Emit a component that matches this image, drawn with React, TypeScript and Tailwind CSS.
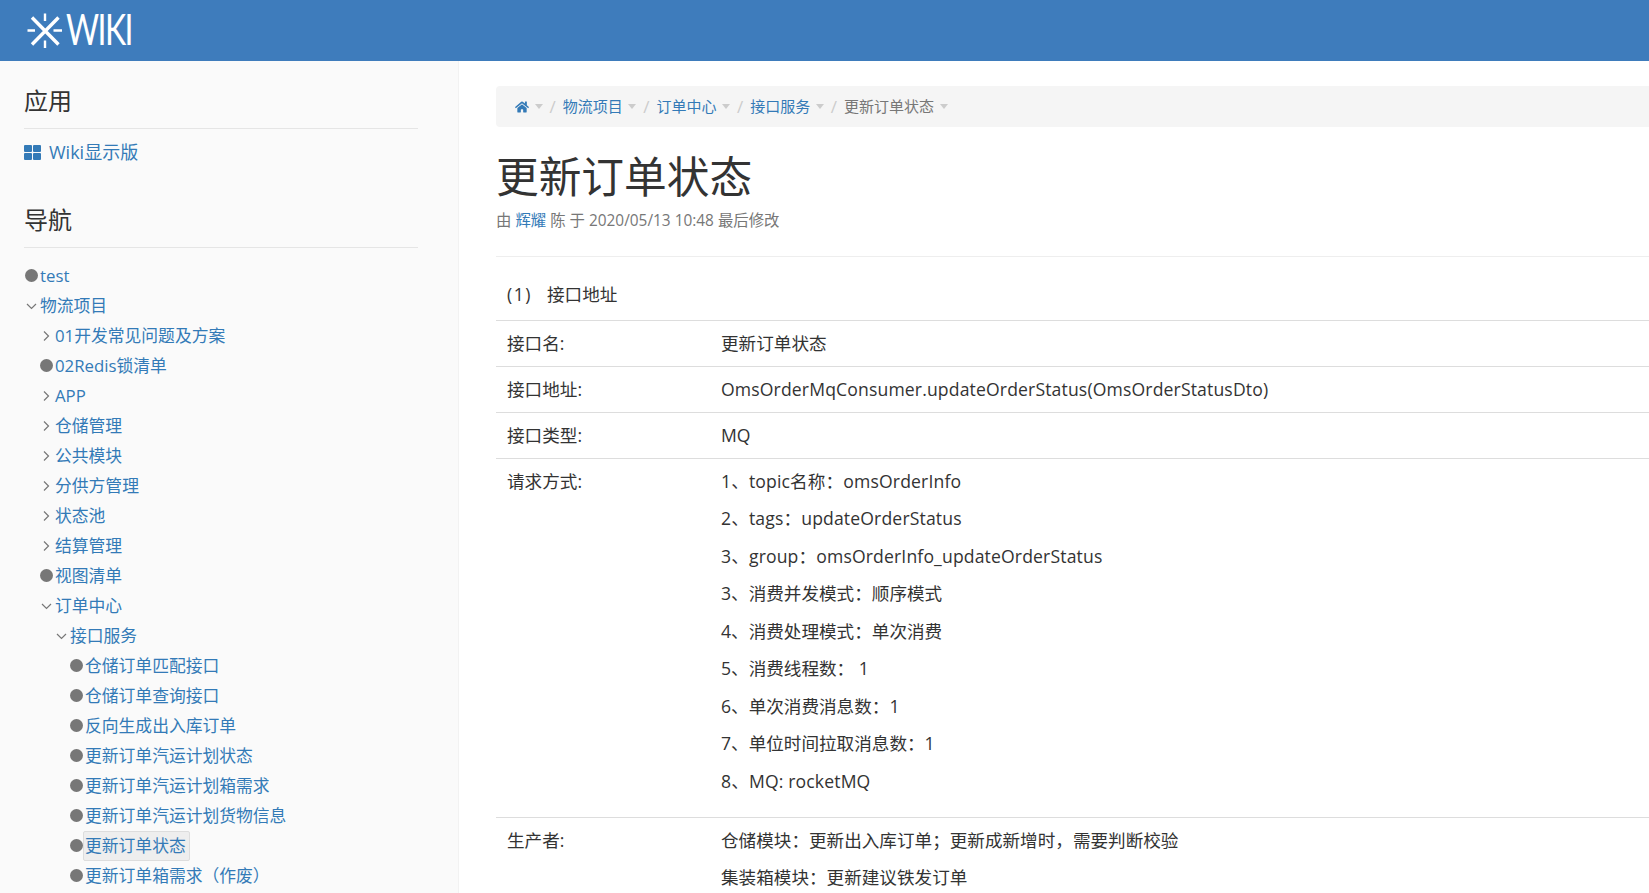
import React from "react";
import { FaHome } from "react-icons/fa";

type Node = { label: string; level: number; kind: "leaf" | "open" | "closed"; active?: boolean };

const tree: Node[] = [
  { label: "test", level: 0, kind: "leaf" },
  { label: "物流项目", level: 0, kind: "open" },
  { label: "01开发常见问题及方案", level: 1, kind: "closed" },
  { label: "02Redis锁清单", level: 1, kind: "leaf" },
  { label: "APP", level: 1, kind: "closed" },
  { label: "仓储管理", level: 1, kind: "closed" },
  { label: "公共模块", level: 1, kind: "closed" },
  { label: "分供方管理", level: 1, kind: "closed" },
  { label: "状态池", level: 1, kind: "closed" },
  { label: "结算管理", level: 1, kind: "closed" },
  { label: "视图清单", level: 1, kind: "leaf" },
  { label: "订单中心", level: 1, kind: "open" },
  { label: "接口服务", level: 2, kind: "open" },
  { label: "仓储订单匹配接口", level: 3, kind: "leaf" },
  { label: "仓储订单查询接口", level: 3, kind: "leaf" },
  { label: "反向生成出入库订单", level: 3, kind: "leaf" },
  { label: "更新订单汽运计划状态", level: 3, kind: "leaf" },
  { label: "更新订单汽运计划箱需求", level: 3, kind: "leaf" },
  { label: "更新订单汽运计划货物信息", level: 3, kind: "leaf" },
  { label: "更新订单状态", level: 3, kind: "leaf", active: true },
  { label: "更新订单箱需求（作废）", level: 3, kind: "leaf" },
];

const indent = ["pl-[24px]", "pl-[39px]", "pl-[54px]", "pl-[69px]"];

function Logo() {
  return (
    <div className="flex items-center">
      <svg width="36" height="36" viewBox="0 0 36 36" className="shrink-0">
        <g stroke="#fff" fill="none">
          <path d="M5 31.5 L31.5 4.5 M5 4.5 L31.5 31.5" strokeWidth="3.4" />
          <path d="M18 0.5 V8 M18 27.5 V35 M0.5 17.5 H8 M26.5 17.5 H35" strokeWidth="2.4" />
        </g>
      </svg>
      <span className="mb-[3px] ml-[3px] origin-left scale-x-[0.76] font-['Lato',sans-serif] text-[42px] font-normal leading-[44px] tracking-[-2px] text-white">WIKI</span>
    </div>
  );
}

function TreeRow({ node }: { node: Node }) {
  return (
    <div className={`flex h-[30px] items-center ${indent[node.level]}`}>
      <span className="flex w-[16px] shrink-0 justify-start">
        {node.kind === "leaf" && <span className="mb-[2px] ml-[1px] h-[13px] w-[13px] rounded-full bg-[#777]" />}
        {node.kind === "open" && (
          <svg width="14" height="14" viewBox="0 0 14 14" className="mb-[1px]" fill="none" stroke="#777" strokeWidth="1.2">
            <path d="M3 5 L7.5 9.5 L12 5" />
          </svg>
        )}
        {node.kind === "closed" && (
          <svg width="14" height="14" viewBox="0 0 14 14" className="mb-[1px]" fill="none" stroke="#777" strokeWidth="1.2">
            <path d="M5 2.5 L9.5 7 L5 11.5" />
          </svg>
        )}
      </span>
      <span
        className={
          node.active
            ? "-ml-[2px] flex h-[30px] items-center rounded-[2px] border border-[#ddd] bg-[#eee] pl-[1px] pr-[3px] text-[#337ab7]"
            : "text-[#337ab7]"
        }
      >
        {node.label}
      </span>
    </div>
  );
}

function Sidebar() {
  return (
    <aside className="w-[459px] shrink-0 border-r border-[#f2f2f2] bg-[#fafafa]">
      <div className="ml-[24px] mr-[40px] mt-[22px] border-b border-[#e5e5e5] pb-[9px] text-[24px] leading-[36px] text-[#333]">应用</div>
      <div className="mx-[24px] mt-[7px] flex h-[32px] items-center text-[18px] text-[#337ab7]">
        <span className="grid h-[15px] w-[17px] grid-cols-2 gap-[1px]">
          <span className="rounded-[1px] bg-[#337ab7]" />
          <span className="rounded-[1px] bg-[#337ab7]" />
          <span className="rounded-[1px] bg-[#337ab7]" />
          <span className="rounded-[1px] bg-[#337ab7]" />
        </span>
        <span className="ml-[8px]">Wiki显示版</span>
      </div>
      <div className="ml-[24px] mr-[40px] mt-[34px] border-b border-[#e5e5e5] pb-[9px] text-[24px] leading-[36px] text-[#333]">导航</div>
      <div className="mt-[13px] text-[16.8px] leading-[24px]">
        {tree.map((n) => (
          <TreeRow key={n.label} node={n} />
        ))}
      </div>
    </aside>
  );
}

function Crumb({ children, link = true }: { children: React.ReactNode; link?: boolean }) {
  return (
    <>
      <span className={link ? "text-[#337ab7]" : "text-[#777]"}>{children}</span>
      <span className="ml-[5.5px] h-0 w-0 border-x-[4.5px] border-t-[5px] border-x-transparent border-t-[#ccc]" />
    </>
  );
}

function Slash() {
  return <span className="mx-[7px] text-[17px] text-[#ccc]">/</span>;
}

function Breadcrumb() {
  return (
    <nav className="flex h-[41px] items-center rounded-l-[4px] bg-[#f5f5f5] pl-[19px] text-[15px]">
      <Crumb>
        <FaHome className="text-[14px]" />
      </Crumb>
      <Slash />
      <Crumb>物流项目</Crumb>
      <Slash />
      <Crumb>订单中心</Crumb>
      <Slash />
      <Crumb>接口服务</Crumb>
      <Slash />
      <Crumb link={false}>更新订单状态</Crumb>
    </nav>
  );
}

function Row({ label, lines }: { label: string; lines: string[] }) {
  const top = lines.length === 2 ? "pt-[10.5px]" : "pt-[9.5px]";
  return (
    <tr className="border-t border-[#ddd] align-top">
      <td className={`w-[214px] pb-[11.5px] pl-[11px] ${top}`}>{label}</td>
      <td className={`pb-[11.5px] pl-[11px] ${top}`}>
        {lines.map((l, i) => (
          <p
            key={i}
            className={`${lines.length > 2 ? "mb-[13.5px] last:mb-[12.6px]" : i < lines.length - 1 ? "mb-[13.4px]" : ""} ${/[a-z]{4}/i.test(l) ? "tracking-[0.14px]" : ""}`}
          >
            {l}
          </p>
        ))}
      </td>
    </tr>
  );
}

export default function App() {
  return (
    <div className="flex h-[893px] w-full flex-col overflow-hidden bg-white font-['Open_Sans','Noto_Sans_CJK_SC',sans-serif] text-[#333]">
      <header className="flex h-[61px] shrink-0 items-center bg-[#3e7cbc] pl-[27px]">
        <Logo />
      </header>
      <div className="flex min-h-0 flex-1">
        <Sidebar />
        <main className="min-w-0 flex-1 pl-[37px] pt-[25px]">
          <Breadcrumb />
          <h1 className="mt-[25px] text-[42.7px] font-normal leading-[50px] text-[#333]">更新订单状态</h1>
          <div className="mt-[8px] text-[15.4px] leading-[22px] text-[#777]">
            由 <span className="text-[#337ab7]">辉耀</span> 陈 于 2020/05/13 10:48 最后修改
          </div>
          <div className="mt-[24px] border-t border-[#eee]" />
          <table className="w-full border-collapse text-[17.6px] leading-[24px]">
            <tbody>
              <tr>
                <td colSpan={2} className="pb-[14px] pl-[11px] pt-[25px]">
                  <span className="mr-[15px] tracking-[1.5px]">(1)</span>接口地址
                </td>
              </tr>
              <Row label="接口名:" lines={["更新订单状态"]} />
              <Row label="接口地址:" lines={["OmsOrderMqConsumer.updateOrderStatus(OmsOrderStatusDto)"]} />
              <Row label="接口类型:" lines={["MQ"]} />
              <Row
                label="请求方式:"
                lines={[
                  "1、topic名称：omsOrderInfo",
                  "2、tags：updateOrderStatus",
                  "3、group：omsOrderInfo_updateOrderStatus",
                  "3、消费并发模式：顺序模式",
                  "4、消费处理模式：单次消费",
                  "5、消费线程数： 1",
                  "6、单次消费消息数：1",
                  "7、单位时间拉取消息数：1",
                  "8、MQ: rocketMQ",
                ]}
              />
              <Row label="生产者:" lines={["仓储模块：更新出入库订单；更新成新增时，需要判断校验", "集装箱模块：更新建议铁发订单"]} />
            </tbody>
          </table>
        </main>
      </div>
    </div>
  );
}
